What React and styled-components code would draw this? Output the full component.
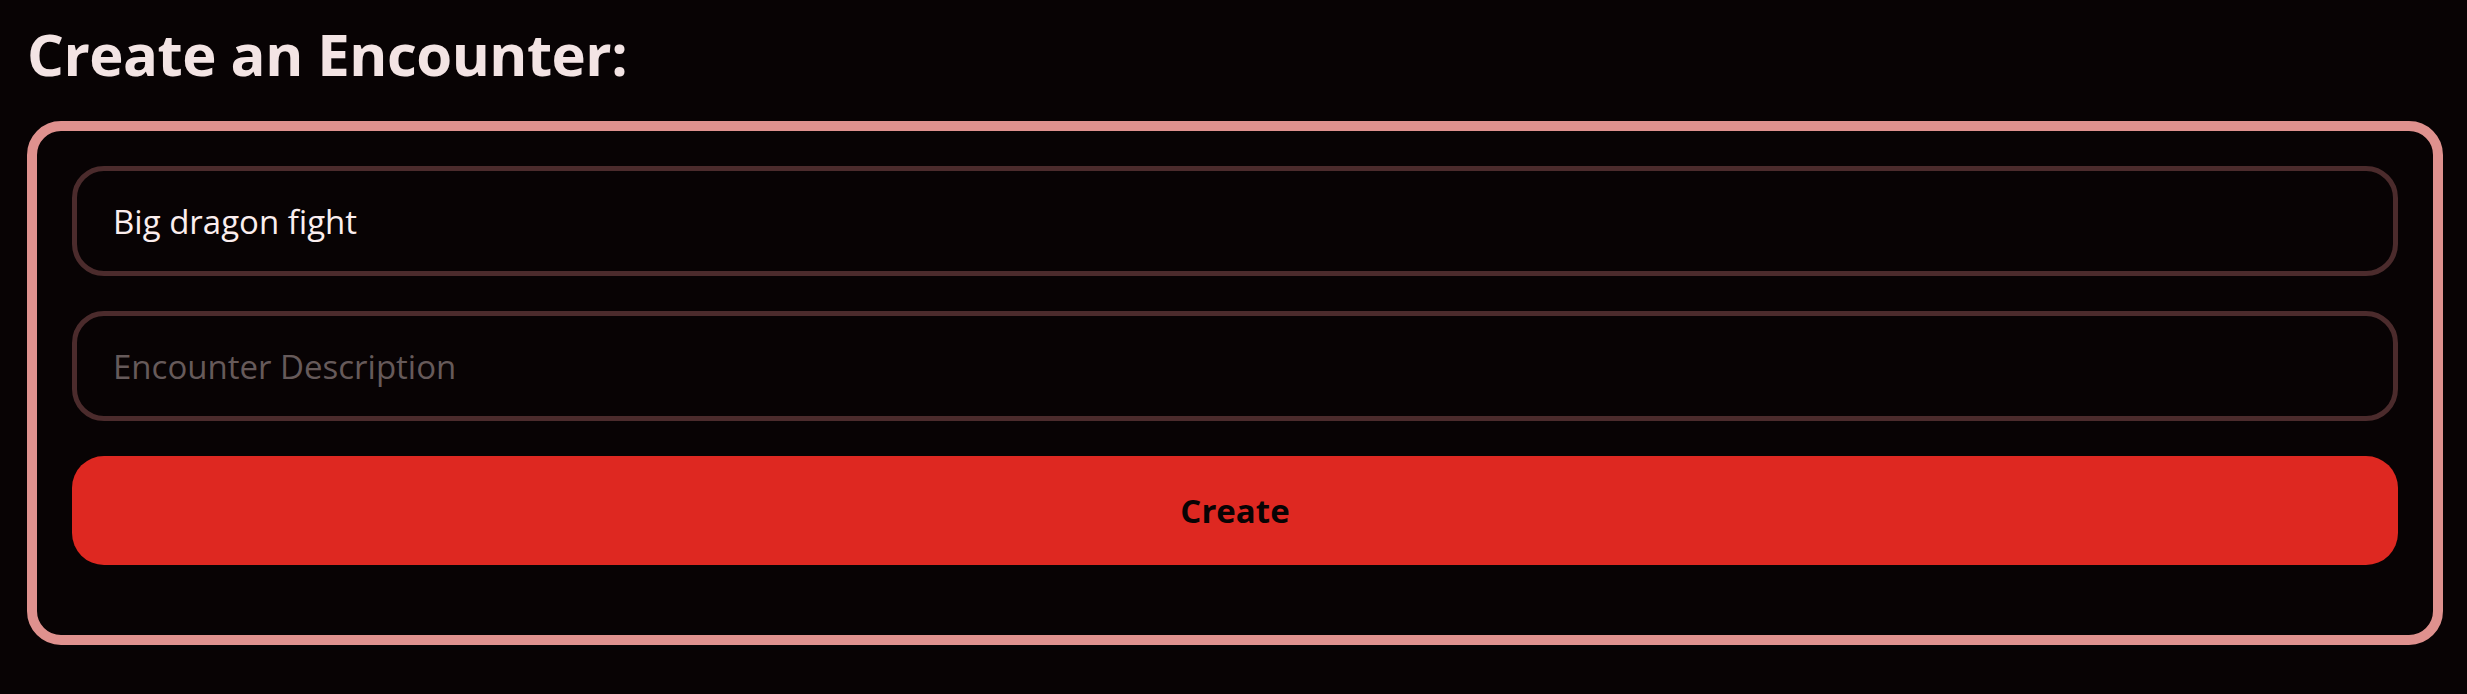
import React, { useState } from "react";
import styled, { createGlobalStyle } from "styled-components";

const GlobalStyle = createGlobalStyle`
  html, body {
    margin: 0;
    padding: 0;
    background: #080304;
  }

  body {
    font-family: "Open Sans", "Noto Sans", "Liberation Sans", sans-serif;
  }
`;

const Page = styled.main`
  min-height: 694px;
  box-sizing: border-box;
  padding: 0 24px 0 27px;
  background: #080304;
`;

const Title = styled.h1`
  margin: 0;
  padding: 18px 0 0;
  height: 121px;
  box-sizing: border-box;
  font-size: 58px;
  line-height: 72px;
  font-weight: 700;
  color: #f3e4e4;
  letter-spacing: -0.5px;
`;

const Card = styled.form`
  display: flex;
  flex-direction: column;
  gap: 35px;
  padding: 35px 35px 70px;
  border: 10px solid #df918e;
  border-radius: 34px;
`;

const Field = styled.input`
  height: 110px;
  box-sizing: border-box;
  padding: 0 36px;
  border: 5px solid #4b2b2c;
  border-radius: 32px;
  background: transparent;
  color: #fbeeee;
  font-family: inherit;
  font-size: 33px;
  outline: none;

  &::placeholder {
    color: #665a5a;
  }
`;

const SubmitButton = styled.button`
  height: 109px;
  border: none;
  border-radius: 32px;
  background: #de2821;
  color: #080304;
  font-family: inherit;
  font-size: 33px;
  font-weight: 700;
  cursor: pointer;
`;

export default function App() {
  const [name, setName] = useState("Big dragon fight");
  const [description, setDescription] = useState("");

  return (
    <Page>
      <GlobalStyle />
      <Title>Create an Encounter:</Title>
      <Card onSubmit={(e) => e.preventDefault()}>
        <Field value={name} onChange={(e) => setName(e.target.value)} />
        <Field
          value={description}
          placeholder="Encounter Description"
          onChange={(e) => setDescription(e.target.value)}
        />
        <SubmitButton type="submit">Create</SubmitButton>
      </Card>
    </Page>
  );
}
